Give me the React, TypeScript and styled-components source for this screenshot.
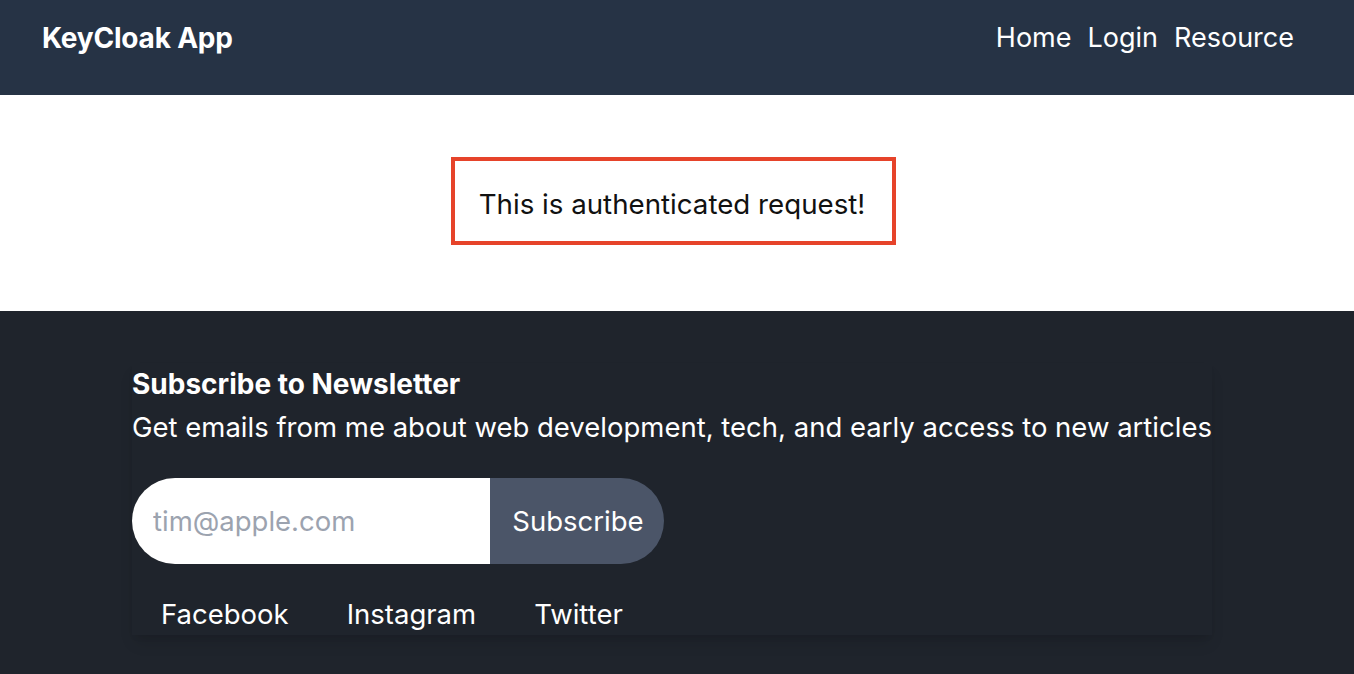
import React from "react";
import styled, { createGlobalStyle } from "styled-components";

const Global = createGlobalStyle`
  html, body { margin: 0; padding: 0; }
  body {
    font-family: Inter, "Noto Sans", "Liberation Sans", sans-serif;
    background: #1f242c;
  }
  * { box-sizing: border-box; }
`;

const Page = styled.div`
  display: flex;
  flex-direction: column;
  min-height: 674px;
`;

const Header = styled.header`
  height: 95px;
  background: #263345;
  display: flex;
  align-items: flex-start;
  justify-content: space-between;
  padding: 17px 60px 0 42px;
  color: #ffffff;
`;

const Brand = styled.div`
  font-size: 28px;
  line-height: 42px;
  font-weight: 700;
  letter-spacing: -0.2px;
`;

const Nav = styled.nav`
  display: flex;
  gap: 16px;
`;

const NavLink = styled.a`
  font-size: 27px;
  line-height: 42px;
  color: #ffffff;
  text-decoration: none;
`;

const Main = styled.main`
  background: #ffffff;
  height: 216px;
  display: flex;
  justify-content: center;
  padding: 62px 7px 0 0;
`;

const Notice = styled.div`
  border: 4px solid #e6432a;
  height: 88px;
  padding: 5px 27px 0 24px;
  display: flex;
  align-items: center;
  font-size: 27.7px;
  color: #111111;
  white-space: nowrap;
`;

const Footer = styled.footer`
  flex: 1;
  background: #1f242c;
  padding: 52px 0 0 132px;
`;

const Card = styled.div`
  width: 1080px;
  display: flex;
  flex-direction: column;
  box-shadow: 0 10px 15px -3px rgba(0, 0, 0, 0.12), 0 4px 6px -2px rgba(0, 0, 0, 0.06);
  color: #ffffff;
`;

const Title = styled.h3`
  margin: 0;
  font-size: 28px;
  font-weight: 700;
  line-height: 42px;
`;

const Lead = styled.p`
  margin: 0;
  font-size: 27.5px;
  line-height: 44px;
  white-space: nowrap;
`;

const Form = styled.form`
  display: flex;
  margin-top: 29px;
`;

const EmailInput = styled.input`
  width: 358px;
  height: 86px;
  border: none;
  outline: none;
  border-radius: 43px 0 0 43px;
  padding: 0 21px;
  font-family: inherit;
  font-size: 27.5px;
  color: #111827;
  background: #ffffff;
  &::placeholder { color: #9ca3af; }
`;

const SubmitButton = styled.button`
  height: 86px;
  width: 174px;
  border: none;
  border-radius: 0 43px 43px 0;
  background: #4b5568;
  color: #ffffff;
  font-family: inherit;
  font-size: 27.5px;
  padding: 0 0 0 2px;
  cursor: pointer;
`;

const Links = styled.div`
  display: flex;
  margin-top: 29px;
`;

const SocialLink = styled.a`
  padding: 0 29px;
  font-size: 27.5px;
  line-height: 42px;
  color: #ffffff;
  text-decoration: none;
`;

export default function App() {
  return (
    <>
      <Global />
      <Page>
        <Header>
          <Brand>KeyCloak App</Brand>
          <Nav>
            <NavLink href="#">Home</NavLink>
            <NavLink href="#">Login</NavLink>
            <NavLink href="#">Resource</NavLink>
          </Nav>
        </Header>
        <Main>
          <Notice>This is authenticated request!</Notice>
        </Main>
        <Footer>
          <Card>
            <Title>Subscribe to Newsletter</Title>
            <Lead>Get emails from me about web development, tech, and early access to new articles</Lead>
            <Form onSubmit={(e) => e.preventDefault()}>
              <EmailInput type="email" placeholder="tim@apple.com" />
              <SubmitButton type="submit">Subscribe</SubmitButton>
            </Form>
            <Links>
              <SocialLink href="#">Facebook</SocialLink>
              <SocialLink href="#">Instagram</SocialLink>
              <SocialLink href="#">Twitter</SocialLink>
            </Links>
          </Card>
        </Footer>
      </Page>
    </>
  );
}
